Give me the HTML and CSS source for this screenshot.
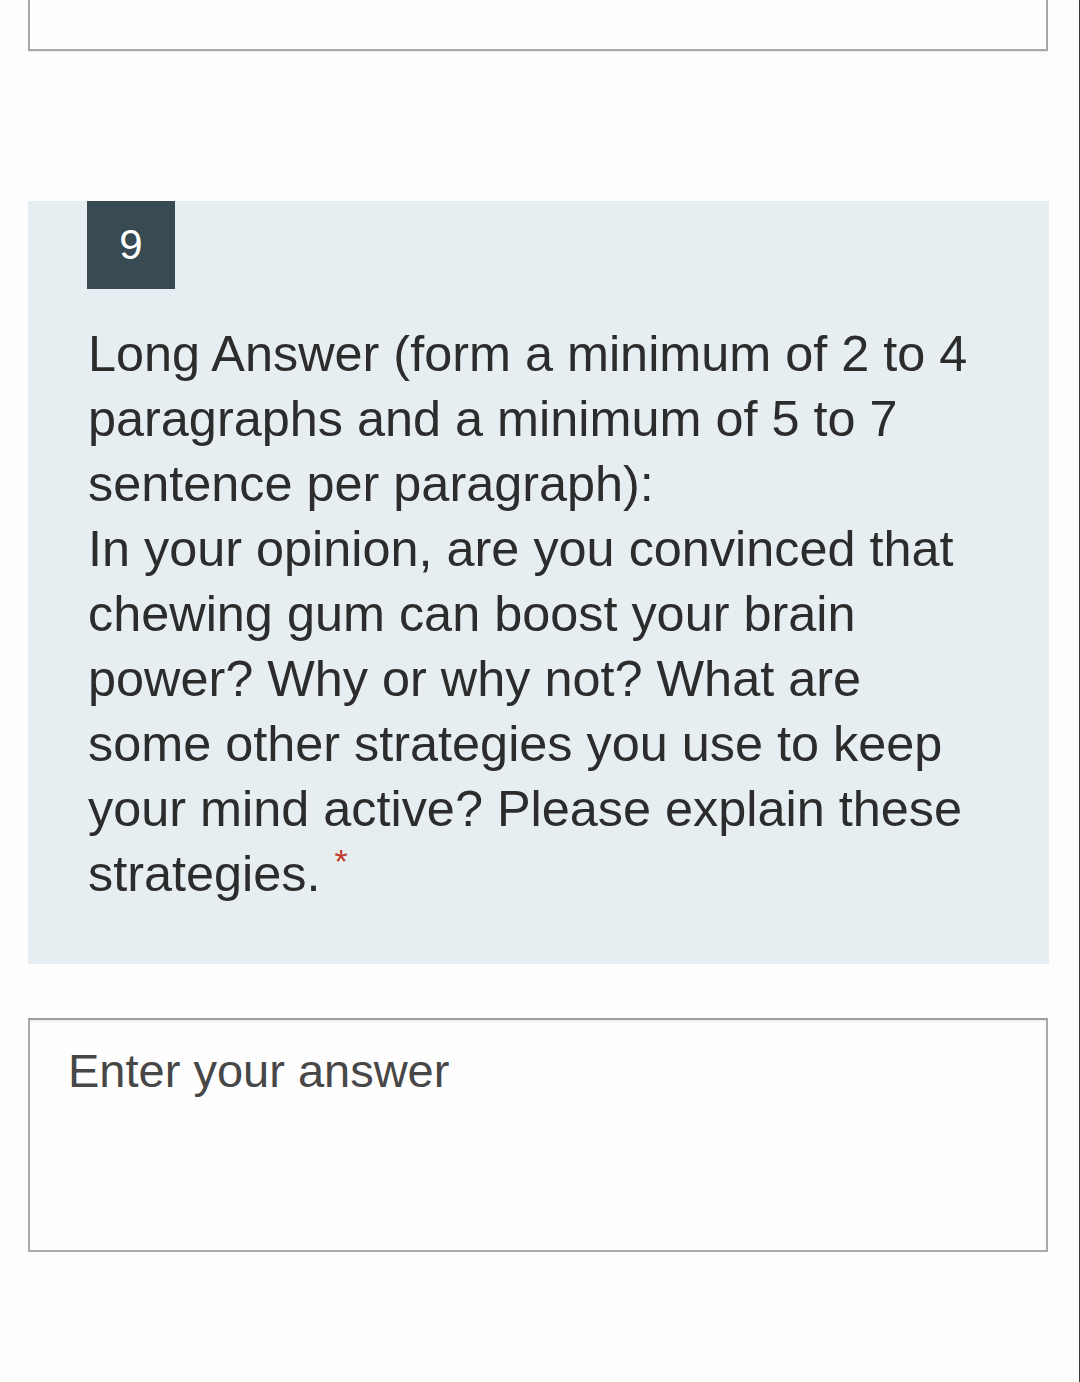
FILE: index.html
```html
<!DOCTYPE html>
<html>
<head>
<meta charset="utf-8">
<link rel="stylesheet" href="styles.css">
</head>
<body>
<div class="page">
  <div class="prev-box"></div>
  <section class="question">
    <div class="badge">9</div>
    <p class="qtext">Long Answer (form a minimum of 2 to 4 paragraphs and a minimum of 5 to 7 sentence per paragraph):<br>In your opinion, are you convinced that chewing gum can boost your brain power? Why or why not? What are some other strategies you use to keep your mind active? Please explain these strategies.<span class="req">*</span></p>
  </section>
  <div class="answer"><span class="placeholder">Enter your answer</span></div>
</div>
</body>
</html>
```

FILE: styles.css
```css
html, body {
  margin: 0;
  padding: 0;
  background: #fdfdfd;
}
.page {
  width: 1079px;
  height: 1382px;
  border-right: 1px solid #3a3a3a;
  font-family: "Liberation Sans", Arial, sans-serif;
  display: flex;
  flex-direction: column;
  box-sizing: content-box;
}
.prev-box {
  margin-left: 28px;
  width: 1016px;
  height: 49px;
  border: 2px solid #a9a9a9;
  border-top: 0;
  background: #fefefe;
  box-shadow: 0 1px 1px rgba(0,0,0,0.08);
}
.question {
  margin-top: 150px;
  margin-left: 28px;
  width: 1021px;
  height: 763px;
  box-sizing: border-box;
  background: #e6eef1;
  padding: 0 70px 0 59px;
}
.badge {
  width: 88px;
  height: 88px;
  background: #384b52;
  color: #ffffff;
  font-size: 42px;
  display: flex;
  align-items: center;
  justify-content: center;
}
.qtext {
  margin: 32px 0 0 1px;
  font-size: 50.4px;
  line-height: 65px;
  color: #2c2c2c;
}
.req {
  display: inline-block;
  margin-left: 14px;
  color: #c2392b;
  font-size: 34px;
  line-height: 16px;
  vertical-align: 18px;
}
.answer {
  margin-top: 54px;
  margin-left: 28px;
  width: 1020px;
  height: 234px;
  border: 2px solid #ababab;
  border-top-color: #9d9d9d;
  box-shadow: inset 0 2px 2px rgba(0,0,0,0.06);
  background: #fefefe;
  padding: 22px 38px;
  box-sizing: border-box;
}
.placeholder {
  font-size: 47px;
  line-height: 58px;
  color: #474747;
}
```
